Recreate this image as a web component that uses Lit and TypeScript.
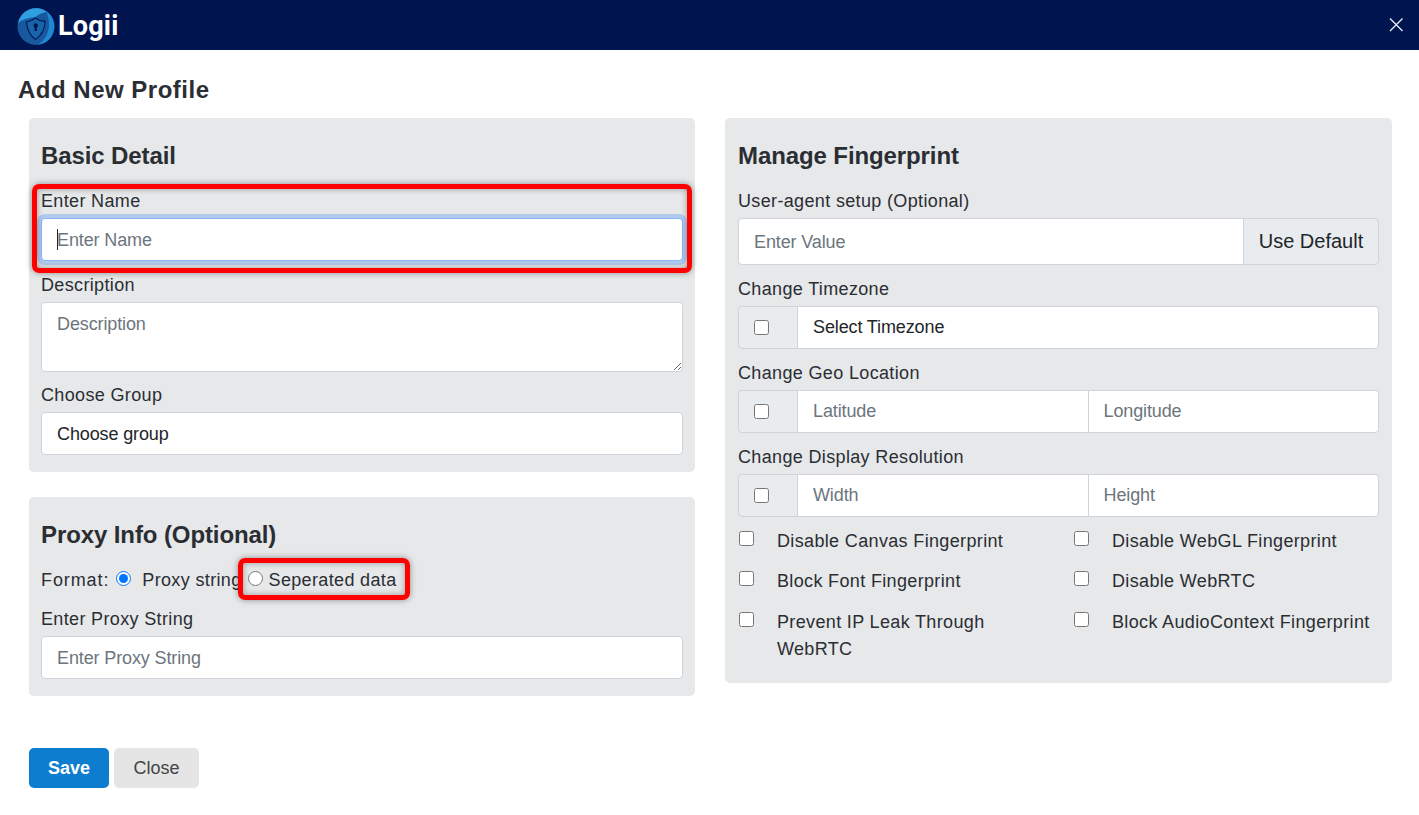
import { LitElement, html, css } from "lit";
import { customElement } from "lit/decorators.js";

@customElement("app-root")
export class AppRoot extends LitElement {
  static styles = css`
    :host {
      display: block;
      height: 815px;
      background: #fff;
      color: #2a2e33;
      font-family: "Liberation Sans", Arial, sans-serif;
      font-size: 18px;
      line-height: 27px;
      letter-spacing: 0.35px;
      overflow: hidden;
    }
    * { box-sizing: border-box; }
    .topbar {
      height: 50px;
      background: #001450;
      display: flex;
      align-items: center;
      padding: 0 15px 0 16px;
    }
    .logo { width: 40px; height: 40px; flex: none; margin-top: 4px; }
    .brand {
      font-family: Roboto, "Liberation Sans", sans-serif;
      font-size: 27px;
      font-weight: 700;
      letter-spacing: 0.2px;
      color: #fff;
      margin-left: 2px;
      margin-top: 2px;
    }
    .x { margin-left: auto; width: 16px; height: 16px; display: block; }
    h1 {
      margin: 25px 0 14px 18px;
      font-size: 24px;
      line-height: 29px;
      font-weight: 700;
      letter-spacing: 0.5px;
    }
    .cols {
      display: grid;
      grid-template-columns: 666px 667px;
      gap: 30px;
      padding-left: 29px;
      align-items: start;
    }
    .stack { display: flex; flex-direction: column; gap: 25px; }
    .panel {
      background: #e7e8ea;
      border-radius: 5px;
      padding: 23px 12px 17px;
    }
    .panel.right { padding: 23px 13px 20px; }
    h2 {
      margin: 0 0 18px;
      font-size: 24px;
      line-height: 29px;
      font-weight: 700;
      letter-spacing: -0.1px;
    }
    .field { position: relative; margin-top: 11px; }
    h2 + .field { margin-top: 0; }
    label.cap { display: block; margin-bottom: 3px; }
    input.text, textarea, select {
      display: block;
      width: 100%;
      height: 43px;
      padding: 7px 15px;
      border: 1px solid #ced4da;
      border-radius: 4px;
      background: #fff;
      color: #212529;
      font: inherit;
      letter-spacing: -0.12px;
      outline: none;
      appearance: none;
      margin: 0;
    }
    textarea { height: 70px; resize: vertical; appearance: auto; padding-top: 8px; }
    .low { padding: 8px 15px 6px !important; }
    ::placeholder { color: #6c757d; opacity: 1; }
    input.focus {
      border-color: #86b7fe;
      box-shadow: 0 0 0 4px rgba(13, 110, 253, 0.25);
    }
    .gap10 { margin-top: 10px; }
    .caretbox { position: relative; }
    .caret {
      position: absolute;
      left: 16px;
      top: 11px;
      width: 1px;
      height: 21px;
      background: #212529;
    }
    .mark {
      position: absolute;
      border: 5px solid #fe0000;
      border-radius: 7px;
      box-shadow: 0 0 6px rgba(0, 0, 0, 0.4), inset 0 0 6px rgba(0, 0, 0, 0.35);
      pointer-events: none;
    }
    .mark.name { left: -9px; right: -9px; top: -4px; bottom: -12px; }
    .mark.sep { left: -5px; right: -13px; top: -8px; bottom: -6px; }
    .format {
      display: flex;
      align-items: center;
      height: 27px;
      margin-top: -1px;
      margin-bottom: 13px;
    }
    .format > span:first-child, .format > .ptxt { padding-top: 1px; }
    .format > span:first-child { letter-spacing: 0.9px; }
    .format input { margin: 0; width: 15px; height: 15px; flex: none; }
    .format .r1 { margin: -3px 11px 0 7px; }
    .sepwrap { position: relative; display: flex; align-items: center; margin-left: 1px; }
    .sepwrap input { margin: -3px 6px 0 5px; }
    .sepwrap .ptxt { padding-top: 1px; }
    .group { display: flex; align-items: stretch; }
    .addon {
      width: 60px;
      flex: none;
      height: 43px;
      display: flex;
      align-items: center;
      padding-left: 15px;
      background: #e9ecef;
      border: 1px solid #ced4da;
      border-radius: 4px 0 0 4px;
    }
    .addon input { margin: 0; width: 15px; height: 15px; }
    .group input.text, .group select {
      flex: 1 1 0;
      width: 0;
      min-width: 0;
      border-radius: 0;
      margin-left: -1px;
    }
    .group input.text:last-child:not(.only) { flex-basis: 4px; border-radius: 0 4px 4px 0; }
    .group select { border-radius: 0 4px 4px 0; }
    .group input.full { border-radius: 4px 0 0 4px; margin-left: 0; height: 47px; flex-basis: 0; }
    .btn-default {
      flex: none;
      width: 136px;
      height: 47px;
      margin-left: -1px;
      background: #e9ecef;
      border: 1px solid #ced4da;
      border-radius: 0 4px 4px 0;
      color: #212529;
      font: inherit;
      font-size: 20px;
      letter-spacing: 0;
      padding: 0;
    }
    .checks {
      display: grid;
      grid-template-columns: 335px 1fr;
      margin-top: 11px;
      row-gap: 13px;
      padding-left: 1px;
    }
    .check { display: flex; align-items: flex-start; padding-right: 24px; }
    .check:nth-child(even) { padding-right: 0; }
    .check input { margin: 3px 23px 0 0; width: 15px; height: 15px; flex: none; }
    .check:nth-child(n + 5) { margin-top: 1px; }
    .actions { display: flex; gap: 5px; margin: 52px 0 0 29px; }
    .actions button {
      height: 40px;
      border: 0;
      border-radius: 5px;
      font: inherit;
      letter-spacing: 0;
      padding: 0;
    }
    .actions .save { width: 80px; background: #0d7dd0; color: #fff; font-weight: 700; }
    .actions .close { width: 85px; background: #e5e5e5; color: #444; }
  `;

  render() {
    return html`
      <div class="topbar">
        <svg class="logo" viewBox="0 0 40 40">
          <circle cx="20" cy="19.5" r="18.5" fill="#17599c"></circle>
          <path d="M30 4A18.5 18.5 0 0 1 22 37.8C29 33 33 26 33 17C33 12 32 8 30 4Z" fill="#2087d2"></path>
          <path d="M2 16A18.5 18.5 0 0 1 31 4.7C27 5.5 23 7 19.5 10C12 10.5 6 12.5 2 16Z" fill="#2f9fe0"></path>
          <path d="M10.5 15C14 14.5 17 13 19.5 11C22 13 25 14.5 29 14C29 22 25.5 28.5 19.5 32.5C14 28.5 11 22 10.5 15Z" fill="#1a64aa" stroke="#001c5c" stroke-width="1.2"></path>
          <circle cx="19.7" cy="18.5" r="2.2" fill="#001450"></circle>
          <path d="M18.9 19H20.5L21 24H18.4Z" fill="#001450"></path>
        </svg>
        <span class="brand">Logii</span>
        <svg class="x" viewBox="0 0 16 16"><path d="M2 1.5L14.5 14M14.5 1.5L2 14" stroke="#e6eaf2" stroke-width="1.4" fill="none"></path></svg>
      </div>
      <h1>Add New Profile</h1>
      <div class="cols">
        <div class="stack">
          <section class="panel">
            <h2>Basic Detail</h2>
            <div class="field">
              <label class="cap">Enter Name</label>
              <div class="caretbox">
                <input class="text focus low" placeholder="Enter Name" />
                <span class="caret"></span>
              </div>
              <span class="mark name"></span>
            </div>
            <div class="field">
              <label class="cap">Description</label>
              <textarea placeholder="Description"></textarea>
            </div>
            <div class="field gap10">
              <label class="cap">Choose Group</label>
              <select class="low"><option>Choose group</option></select>
            </div>
          </section>
          <section class="panel">
            <h2>Proxy Info (Optional)</h2>
            <div class="format">
              <span>Format:</span>
              <input class="r1" type="radio" name="fmt" checked />
              <span class="ptxt">Proxy string</span>
              <span class="sepwrap">
                <input type="radio" name="fmt" />
                <span class="ptxt">Seperated data</span>
                <span class="mark sep"></span>
              </span>
            </div>
            <label class="cap">Enter Proxy String</label>
            <input class="text low" placeholder="Enter Proxy String" />
          </section>
        </div>
        <section class="panel right">
          <h2>Manage Fingerprint</h2>
          <div class="field">
            <label class="cap">User-agent setup (Optional)</label>
            <div class="group">
              <input class="text full only low" placeholder="Enter Value" />
              <button class="btn-default">Use Default</button>
            </div>
          </div>
          <div class="field">
            <label class="cap">Change Timezone</label>
            <div class="group">
              <span class="addon"><input type="checkbox" /></span>
              <select><option>Select Timezone</option></select>
            </div>
          </div>
          <div class="field">
            <label class="cap">Change Geo Location</label>
            <div class="group">
              <span class="addon"><input type="checkbox" /></span>
              <input class="text" placeholder="Latitude" />
              <input class="text" placeholder="Longitude" />
            </div>
          </div>
          <div class="field">
            <label class="cap">Change Display Resolution</label>
            <div class="group">
              <span class="addon"><input type="checkbox" /></span>
              <input class="text" placeholder="Width" />
              <input class="text" placeholder="Height" />
            </div>
          </div>
          <div class="checks">
            <label class="check"><input type="checkbox" /><span>Disable Canvas Fingerprint</span></label>
            <label class="check"><input type="checkbox" /><span>Disable WebGL Fingerprint</span></label>
            <label class="check"><input type="checkbox" /><span>Block Font Fingerprint</span></label>
            <label class="check"><input type="checkbox" /><span>Disable WebRTC</span></label>
            <label class="check"><input type="checkbox" /><span>Prevent IP Leak Through WebRTC</span></label>
            <label class="check"><input type="checkbox" /><span>Block AudioContext Fingerprint</span></label>
          </div>
        </section>
      </div>
      <div class="actions">
        <button class="save">Save</button>
        <button class="close">Close</button>
      </div>
    `;
  }
}
